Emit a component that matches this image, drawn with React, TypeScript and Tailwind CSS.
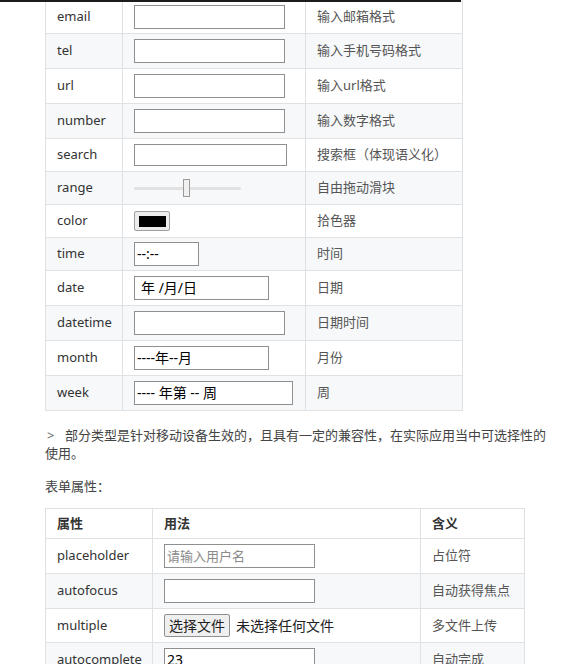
import React from "react";

const font = { fontFamily: '"Noto Sans", "Noto Sans CJK SC", sans-serif' };

function Box({ w, children, muted }: { w: string; children?: React.ReactNode; muted?: boolean }) {
  return (
    <div
      className={`${w} flex h-[24px] items-center border border-[#8f8f8f] bg-white px-[2px] leading-none ${
        muted ? "text-[13px] text-[#8a8a8a]" : "text-[14px] text-black"
      }`}>
      {children}
    </div>
  );
}

function Range() {
  return (
    <div className="relative flex h-[20px] w-[107px] items-center">
      <div className="h-[3px] w-full rounded-full bg-[#e2e2e2]" />
      <div className="absolute left-[49px] top-[1px] h-[18px] w-[7px] border border-[#9a9a9a] bg-[#f0f0f0]" />
    </div>
  );
}

function ColorSwatch() {
  return (
    <div className="flex h-[20px] w-[36px] items-center justify-center rounded-[2px] border border-[#9f9f9f] bg-[#ececec]">
      <div className="h-[11px] w-[27px] bg-black" />
    </div>
  );
}

function FilePick() {
  return (
    <div className="flex items-center gap-[6px] text-[14px] text-[#222]">
      <div className="flex h-[23px] w-[66px] items-center justify-center rounded-[2px] border border-[#8f8f8f] bg-[#efefef]">
        选择文件
      </div>
      <span>未选择任何文件</span>
    </div>
  );
}

// row heights are content heights between the 1px rules
const types: [string, React.ReactNode, string, number][] = [
  ["email", <Box w="w-[151px]" />, "输入邮箱格式", 33],
  ["tel", <Box w="w-[151px]" />, "输入手机号码格式", 34],
  ["url", <Box w="w-[151px]" />, "输入url格式", 34],
  ["number", <Box w="w-[151px]" />, "输入数字格式", 34],
  ["search", <div className="h-[22px] w-[153px] border border-[#8f8f8f] bg-white" />, "搜索框（体现语义化）", 32],
  ["range", <Range />, "自由拖动滑块", 32],
  ["color", <ColorSwatch />, "拾色器", 32],
  ["time", <Box w="w-[65px]">--:--</Box>, "时间", 32],
  ["date", <Box w="w-[135px]"><span className="pl-[4px]">年 /月/日</span></Box>, "日期", 34],
  ["datetime", <Box w="w-[151px]" />, "日期时间", 34],
  ["month", <Box w="w-[135px]">----年--月</Box>, "月份", 34],
  ["week", <Box w="w-[159px]">---- 年第 -- 周</Box>, "周", 34],
];

const attrs: [string, React.ReactNode, string, number][] = [
  ["placeholder", <Box w="w-[151px]" muted>请输入用户名</Box>, "占位符", 34],
  ["autofocus", <Box w="w-[151px]" />, "自动获得焦点", 34],
  ["multiple", <FilePick />, "多文件上传", 33],
  ["autocomplete", <Box w="w-[151px]">23</Box>, "自动完成", 34],
];

function Cell({ h, className, children }: { h: number; className?: string; children?: React.ReactNode }) {
  return (
    <td className="border border-[#dfe2e5] p-0 align-middle">
      <div className={`flex items-center px-[11px] ${className ?? ""}`} style={{ height: h }}>
        {children}
      </div>
    </td>
  );
}

export default function App() {
  return (
    <div className="min-h-[664px] w-[566px] overflow-hidden bg-white text-[13px] text-[#333]" style={font}>
      <div className="relative z-10 h-[2px] w-[461px] bg-[#1c1c1c]" />
      <div className="pl-[45px]">
        <table className="-mt-[3px] w-[417px] table-fixed border-collapse">
          <colgroup>
            <col className="w-[77px]" />
            <col className="w-[183px]" />
            <col className="w-[157px]" />
          </colgroup>
          <tbody>
            {types.map(([name, widget, desc, h], i) => (
              <tr key={name} className={i % 2 === 1 ? "bg-[#f6f8fa]" : "bg-white"}>
                <Cell h={h} className="text-[#333]">{name}</Cell>
                <Cell h={h}>{widget}</Cell>
                <Cell h={h} className="text-[#555]">{desc}</Cell>
              </tr>
            ))}
          </tbody>
        </table>

        <p className="mt-[15px] w-[506px] text-[13px] leading-[18px] text-[#444]">
          <span className="inline-block w-[20px] pl-[2px] text-[#666]">&gt;</span>
          部分类型是针对移动设备生效的，且具有一定的兼容性，在实际应用当中可选择性的使用。
        </p>

        <p className="mt-[15px] text-[13px] leading-[18px] text-[#444]">表单属性：</p>

        <table className="mt-[13px] w-[479px] table-fixed border-collapse">
          <colgroup>
            <col className="w-[107px]" />
            <col className="w-[268px]" />
            <col className="w-[104px]" />
          </colgroup>
          <thead>
            <tr className="bg-white">
              {["属性", "用法", "含义"].map((t) => (
                <th key={t} className="border border-[#dfe2e5] p-0 text-left">
                  <div className="flex h-[29px] items-center px-[11px] font-bold text-[#333]">{t}</div>
                </th>
              ))}
            </tr>
          </thead>
          <tbody>
            {attrs.map(([name, widget, desc, h], i) => (
              <tr key={name} className={i % 2 === 1 ? "bg-[#f6f8fa]" : "bg-white"}>
                <Cell h={h} className="text-[#333]">{name}</Cell>
                <Cell h={h}>{widget}</Cell>
                <Cell h={h} className="text-[#555]">{desc}</Cell>
              </tr>
            ))}
          </tbody>
        </table>
      </div>
    </div>
  );
}
